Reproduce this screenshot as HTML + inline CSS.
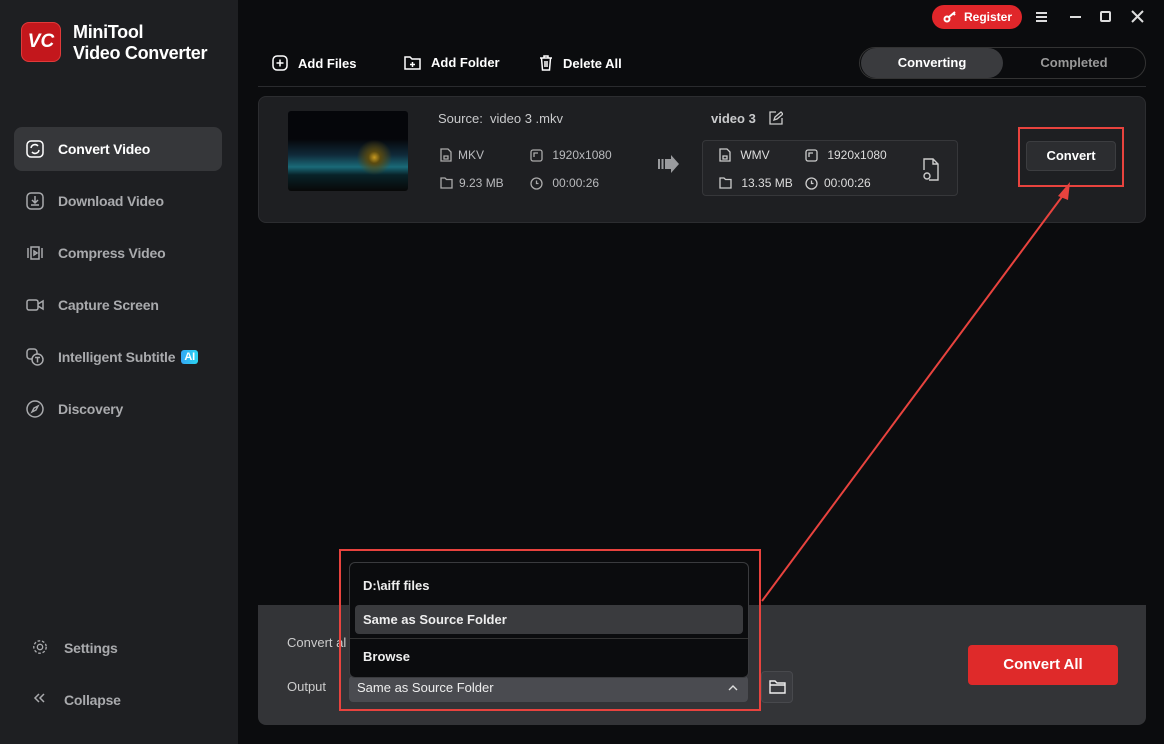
<!DOCTYPE html>
<html><head><meta charset="utf-8"><style>
*{box-sizing:border-box;margin:0;padding:0}
body{width:1164px;height:744px;overflow:hidden;background:#0b0c0e;font-family:"Liberation Sans",sans-serif;position:relative;color:#fff}
.sb{position:absolute;left:0;top:0;width:238px;height:744px;background:#1e1f22}
.abs{position:absolute}
.nav{position:absolute;left:14px;width:208px;height:44px;border-radius:8px;font-size:14px;font-weight:bold;color:#a9aaad;display:flex;align-items:center;padding-left:44px;letter-spacing:-0.2px}
.nav svg{position:absolute;left:12px;top:13px}
.t{font-size:13px;color:#c9cacc}
.s{font-size:12px;color:#b9babd;display:flex;align-items:center;gap:6px}
.tb{font-size:13px;font-weight:bold;display:flex;align-items:center;gap:10px}
</style></head><body>
<div class="sb"></div>
<div class="abs" style="left:21px;top:22px;width:40px;height:40px;border-radius:8px;background:#c3171c;border:1px solid #e03a3a;color:#fff;font-weight:bold;font-size:19px;font-style:italic;text-align:center;line-height:38px">VC</div>
<div class="abs" style="left:73px;top:22px;font-size:18px;font-weight:bold;line-height:21px;letter-spacing:-0.3px">MiniTool<br>Video Converter</div>
<div class="nav" style="top:127px;background:#36373a;color:#fff"><svg width="18" height="18" viewBox="0 0 18 18" fill="none" stroke="#fff" stroke-width="1.5"><rect x="1" y="1" width="16" height="16" rx="4"/><path d="M5 8a4 4 0 0 1 7-2M13 10a4 4 0 0 1-7 2"/></svg>Convert Video</div>
<div class="nav" style="top:179px"><svg width="18" height="18" viewBox="0 0 18 18" fill="none" stroke="#a9aaad" stroke-width="1.5"><rect x="1" y="1" width="16" height="16" rx="4"/><path d="M9 4v7M6 8l3 3 3-3M5 13h8"/></svg>Download Video</div>
<div class="nav" style="top:231px"><svg width="18" height="18" viewBox="0 0 18 18" fill="none" stroke="#a9aaad" stroke-width="1.5"><path d="M2 4v10M16 4v10M5 3h8v12H5zM8 7l3 2-3 2z"/></svg>Compress Video</div>
<div class="nav" style="top:283px"><svg width="18" height="18" viewBox="0 0 18 18" fill="none" stroke="#a9aaad" stroke-width="1.5"><rect x="1" y="4" width="11" height="10" rx="2"/><path d="M12 8l5-3v8l-5-3"/></svg>Capture Screen</div>
<div class="nav" style="top:335px"><svg width="18" height="18" viewBox="0 0 18 18" fill="none" stroke="#a9aaad" stroke-width="1.5"><rect x="1" y="1" width="10" height="10" rx="3"/><circle cx="11.5" cy="11.5" r="5.5" fill="#1e1f22"/><path d="M9 9.5h5M11.5 9.5v5"/></svg>Intelligent Subtitle<span style="margin-left:6px;background:linear-gradient(90deg,#35a7f5,#2ad4f0);color:#fff;font-size:11px;padding:1px 3px;border-radius:3px">AI</span></div>
<div class="nav" style="top:387px"><svg width="18" height="18" viewBox="0 0 18 18" fill="none" stroke="#a9aaad" stroke-width="1.5"><circle cx="9" cy="9" r="8"/><path d="M12 6l-2 4-4 2 2-4z"/></svg>Discovery</div>
<div class="nav" style="top:626px;left:20px"><svg width="16" height="16" viewBox="0 0 18 18" fill="none" stroke="#a9aaad" stroke-width="1.5"><circle cx="9" cy="9" r="3"/><circle cx="9" cy="9" r="7" stroke-dasharray="3 2"/></svg>Settings</div>
<div class="nav" style="top:678px;left:20px"><svg width="14" height="14" viewBox="0 0 14 14" fill="none" stroke="#a9aaad" stroke-width="1.5"><path d="M7 3L3 7l4 4M12 3L8 7l4 4"/></svg>Collapse</div>

<!-- top bar -->
<div class="abs" style="left:932px;top:5px;width:90px;height:24px;border-radius:12px;background:#e0262a;font-size:12px;font-weight:bold;line-height:24px;padding-left:32px">Register<svg style="position:absolute;left:11px;top:6px" width="14" height="12" viewBox="0 0 14 12" fill="none" stroke="#fff" stroke-width="2"><circle cx="4" cy="8" r="2.5"/><path d="M6 6l6-5M10 2l2 2"/></svg></div>
<svg class="abs" style="left:1036px;top:12px" width="11" height="10" fill="#ddd"><rect y="0" width="11" height="2"/><rect y="4" width="11" height="2"/><rect y="8" width="11" height="2"/></svg>
<div class="abs" style="left:1070px;top:16px;width:11px;height:2px;background:#ddd"></div>
<div class="abs" style="left:1100px;top:11px;width:11px;height:11px;border:2px solid #ddd;border-radius:2px"></div>
<svg class="abs" style="left:1131px;top:10px" width="13" height="13" stroke="#ddd" stroke-width="2"><path d="M1 1l11 11M12 1L1 12"/></svg>

<div class="abs tb" style="left:272px;top:55px"><svg width="16" height="16" fill="none" stroke="#fff" stroke-width="1.5"><rect x="1" y="1" width="14" height="14" rx="4"/><path d="M8 4.5v7M4.5 8h7"/></svg>Add Files</div>
<div class="abs tb" style="left:404px;top:55px"><svg width="17" height="15" fill="none" stroke="#fff" stroke-width="1.5"><path d="M1 2h5l2 2h8v10H1z M8.5 7v5M6 9.5h5"/></svg>Add Folder</div>
<div class="abs tb" style="left:539px;top:55px"><svg width="14" height="16" fill="none" stroke="#fff" stroke-width="1.5"><path d="M1 3h12M5 3V1h4v2M2.5 3l1 12h7l1-12M6 6v6M8 6v6"/></svg>Delete All</div>
<div class="abs" style="left:859px;top:47px;width:287px;height:32px;border:1px solid #333;border-radius:16px"></div>
<div class="abs" style="left:861px;top:48px;width:142px;height:30px;border-radius:15px;background:#3a3b3e;font-size:13px;font-weight:bold;text-align:center;line-height:30px">Converting</div>
<div class="abs" style="left:1003px;top:48px;width:142px;height:30px;font-size:13px;font-weight:bold;color:#999;text-align:center;line-height:30px">Completed</div>
<div class="abs" style="left:258px;top:86px;width:888px;height:1px;background:#2a2b2e"></div>

<!-- card -->
<div class="abs" style="left:258px;top:96px;width:888px;height:127px;border-radius:8px;background:#1e1f22;border:1px solid #2c2d30"></div>
<div class="abs" style="left:288px;top:111px;width:120px;height:80px;border-radius:3px;background:radial-gradient(circle at 72% 58%,#c89a20 0,#5a4a10 6%,transparent 18%),linear-gradient(180deg,#05060a 35%,#102a3a 55%,#1a6a78 70%,#082228 80%,#080808)"></div>
<div class="abs t" style="left:438px;top:111px">Source:&nbsp; video 3 .mkv</div>
<div class="abs s" style="left:440px;top:148px"><svg width="12" height="14" fill="none" stroke="#aaa" stroke-width="1.3"><path d="M1 1h7l3 3v9H1z M4 8h4v3H4z"/></svg>MKV</div>
<div class="abs s" style="left:530px;top:148px"><svg width="13" height="13" fill="none" stroke="#aaa" stroke-width="1.3"><rect x="1" y="1" width="11" height="11" rx="2"/><path d="M4 8V4h4"/></svg>&nbsp;1920x1080</div>
<div class="abs s" style="left:440px;top:176px"><svg width="13" height="12" fill="none" stroke="#aaa" stroke-width="1.3"><path d="M1 1h4l1.5 1.5H12V11H1z"/></svg>9.23 MB</div>
<div class="abs s" style="left:530px;top:176px"><svg width="13" height="13" fill="none" stroke="#aaa" stroke-width="1.3"><circle cx="6.5" cy="6.5" r="5.5"/><path d="M6.5 3.5v3h2"/></svg>&nbsp;00:00:26</div>
<svg class="abs" style="left:658px;top:154px" width="22" height="20" fill="#9a9b9e"><rect x="0" y="5" width="2" height="10"/><rect x="3.5" y="5" width="2" height="10"/><path d="M7 5h6V1l8 9-8 9v-4H7z"/></svg>
<div class="abs t" style="left:711px;top:111px;font-weight:bold">video 3</div>
<svg class="abs" style="left:769px;top:111px" width="14" height="14" fill="none" stroke="#ccc" stroke-width="1.3"><path d="M7 1H1v12h12V7M5 9l1-3 6-5 2 2-6 5z"/></svg>
<div class="abs" style="left:702px;top:140px;width:256px;height:56px;border-radius:4px;background:#232427;border:1px solid #36373a"></div>
<div class="abs s" style="left:719px;top:148px;color:#ddd"><svg width="12" height="14" fill="none" stroke="#ccc" stroke-width="1.3"><path d="M1 1h7l3 3v9H1z M4 8h4v3H4z"/></svg>&nbsp;WMV</div>
<div class="abs s" style="left:805px;top:148px;color:#ddd"><svg width="13" height="13" fill="none" stroke="#ccc" stroke-width="1.3"><rect x="1" y="1" width="11" height="11" rx="2"/><path d="M4 8V4h4"/></svg>&nbsp;1920x1080</div>
<div class="abs s" style="left:719px;top:176px;color:#ddd"><svg width="13" height="12" fill="none" stroke="#ccc" stroke-width="1.3"><path d="M1 1h4l1.5 1.5H12V11H1z"/></svg>&nbsp;13.35 MB</div>
<div class="abs s" style="left:805px;top:176px;color:#ddd"><svg width="13" height="13" fill="none" stroke="#ccc" stroke-width="1.3"><circle cx="6.5" cy="6.5" r="5.5"/><path d="M6.5 3.5v3h2"/></svg>00:00:26</div>
<svg class="abs" style="left:921px;top:158px" width="20" height="24" fill="none" stroke="#ccc" stroke-width="1.4"><path d="M8 22H17V6l-5-5H3v11 M12 1v5h5"/><circle cx="6" cy="18" r="3"/></svg>
<div class="abs" style="left:1026px;top:141px;width:90px;height:30px;border-radius:4px;background:#2c2d30;border:1px solid #3c3d40;font-size:13px;font-weight:bold;text-align:center;line-height:28px">Convert</div>
<div class="abs" style="left:1018px;top:127px;width:106px;height:60px;border:2px solid #e8433e"></div>

<!-- bottom -->
<div class="abs" style="left:258px;top:605px;width:888px;height:120px;border-radius:0 0 8px 8px;background:#333437"></div>
<div class="abs t" style="left:287px;top:635px;color:#ccc">Convert al</div>
<div class="abs t" style="left:287px;top:679px;color:#ccc">Output</div>
<div class="abs" style="left:349px;top:676px;width:399px;height:26px;border-radius:4px;background:#4a4b50;font-size:13px;line-height:24px;padding-left:8px;color:#eee">Same as Source Folder<svg style="position:absolute;right:10px;top:9px" width="10" height="6" fill="none" stroke="#ddd" stroke-width="1.4"><path d="M1 5l4-4 4 4"/></svg></div>
<div class="abs" style="left:761px;top:671px;width:32px;height:32px;border-radius:4px;background:#3a3b3f;border:1px solid #48494d"><svg style="position:absolute;left:7px;top:8px" width="17" height="14" fill="none" stroke="#eee" stroke-width="1.4"><path d="M1 1h5l2 2h8v10H1z M1 5h15"/></svg></div>
<div class="abs" style="left:968px;top:645px;width:150px;height:40px;border-radius:4px;background:#df2a2a;font-size:15px;font-weight:bold;text-align:center;line-height:40px">Convert All</div>

<div class="abs" style="left:349px;top:562px;width:400px;height:116px;border-radius:6px;background:#0b0c0e;border:1px solid #3a3b3e"></div>
<div class="abs t" style="left:363px;top:578px;font-weight:bold;color:#eee">D:\aiff files</div>
<div class="abs" style="left:355px;top:605px;width:388px;height:29px;border-radius:4px;background:#3a3b3e;font-size:13px;font-weight:bold;line-height:29px;padding-left:8px;color:#eee">Same as Source Folder</div>
<div class="abs" style="left:350px;top:638px;width:398px;height:1px;background:#333"></div>
<div class="abs t" style="left:363px;top:649px;font-weight:bold;color:#eee">Browse</div>
<div class="abs" style="left:339px;top:549px;width:422px;height:162px;border:2px solid #e8433e"></div>

<svg class="abs" style="left:0;top:0" width="1164" height="744"><line x1="762" y1="601" x2="1064" y2="194" stroke="#e8433e" stroke-width="2"/><polygon points="1070,182 1058,196 1068,200" fill="#e8433e"/></svg>
</body></html>
